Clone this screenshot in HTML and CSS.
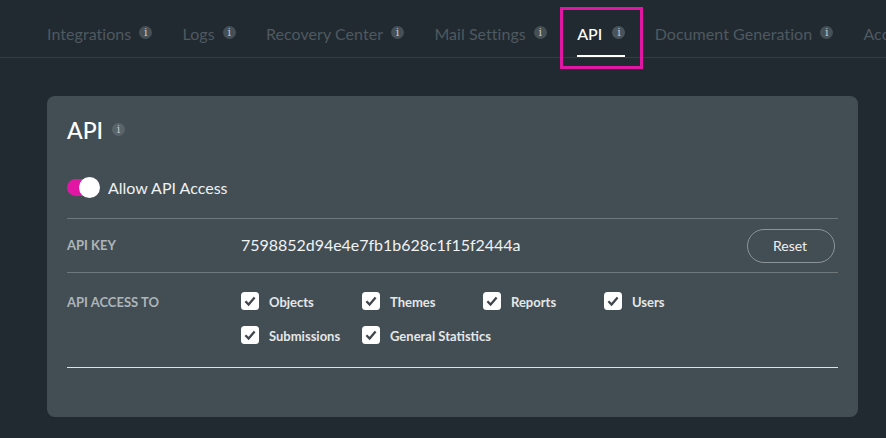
FILE: index.html
```html
<!DOCTYPE html>
<html lang="en">
<head>
<meta charset="utf-8">
<title>API</title>
<link rel="stylesheet" href="styles.css">
</head>
<body>
<nav class="tabs">
  <div class="tab"><span class="tab-label">Integrations</span><span class="info">i</span></div>
  <div class="tab"><span class="tab-label">Logs</span><span class="info">i</span></div>
  <div class="tab"><span class="tab-label">Recovery Center</span><span class="info">i</span></div>
  <div class="tab"><span class="tab-label">Mail Settings</span><span class="info">i</span></div>
  <div class="tab active"><span class="tab-label">API</span><span class="info">i</span></div>
  <div class="tab"><span class="tab-label">Document Generation</span><span class="info">i</span></div>
  <div class="tab"><span class="tab-label">Account</span></div>
  <div class="highlight"></div>
</nav>
<main class="card">
  <h1 class="title">API <span class="info">i</span></h1>
  <div class="toggle-row">
    <span class="toggle"><span class="knob"></span></span>
    <span class="toggle-label">Allow API Access</span>
  </div>
  <div class="row key-row">
    <div class="row-label">API KEY</div>
    <div class="key">7598852d94e4e7fb1b628c1f15f2444a</div>
    <button class="reset">Reset</button>
  </div>
  <div class="row access-row">
    <div class="row-label">API ACCESS TO</div>
    <div class="checks">
      <label class="check"><svg class="box" viewBox="0 0 18 18"><rect width="18" height="18" rx="3.5" fill="#fff"/><path d="M4.4 9.3 7.6 12.6 13.6 5.6" fill="none" stroke="#3f464c" stroke-width="2.3"/></svg>Objects</label>
      <label class="check"><svg class="box" viewBox="0 0 18 18"><rect width="18" height="18" rx="3.5" fill="#fff"/><path d="M4.4 9.3 7.6 12.6 13.6 5.6" fill="none" stroke="#3f464c" stroke-width="2.3"/></svg>Themes</label>
      <label class="check"><svg class="box" viewBox="0 0 18 18"><rect width="18" height="18" rx="3.5" fill="#fff"/><path d="M4.4 9.3 7.6 12.6 13.6 5.6" fill="none" stroke="#3f464c" stroke-width="2.3"/></svg>Reports</label>
      <label class="check"><svg class="box" viewBox="0 0 18 18"><rect width="18" height="18" rx="3.5" fill="#fff"/><path d="M4.4 9.3 7.6 12.6 13.6 5.6" fill="none" stroke="#3f464c" stroke-width="2.3"/></svg>Users</label>
      <label class="check"><svg class="box" viewBox="0 0 18 18"><rect width="18" height="18" rx="3.5" fill="#fff"/><path d="M4.4 9.3 7.6 12.6 13.6 5.6" fill="none" stroke="#3f464c" stroke-width="2.3"/></svg>Submissions</label>
      <label class="check wide"><svg class="box" viewBox="0 0 18 18"><rect width="18" height="18" rx="3.5" fill="#fff"/><path d="M4.4 9.3 7.6 12.6 13.6 5.6" fill="none" stroke="#3f464c" stroke-width="2.3"/></svg>General Statistics</label>
    </div>
  </div>
</main>
</body>
</html>
```

FILE: styles.css
```css
* { box-sizing: border-box; }
html, body { height: 100%; }
body {
  margin: 0;
  background: #212a30;
  font-family: "Lato", sans-serif;
  overflow: hidden;
  color: #fff;
}
.tabs {
  position: relative;
  display: flex;
  height: 58px;
  padding-left: 47px;
  gap: 30.3px;
  border-bottom: 1px solid #333e44;
  white-space: nowrap;
}
.tab {
  display: flex;
  align-items: center;
  gap: 8px;
  height: 57px;
  padding-top: 12px;
  flex: none;
  border-bottom: 2px solid transparent;
  color: #4f5960;
  font-size: 16px;
  letter-spacing: 0.05px;
}
.tab.active {
  gap: 10px;
  margin-right: -1px;
  color: #fff;
  border-bottom-color: #fff;
  font-weight: 500;
}
.tab .info { position: relative; top: -1px; }
.info {
  display: inline-flex;
  align-items: center;
  justify-content: center;
  width: 13px;
  height: 13px;
  border-radius: 50%;
  background: #454f56;
  color: #c3c8cb;
  font-family: "DejaVu Serif", serif;
  font-size: 11px;
  font-weight: 400;
  line-height: 1;
  letter-spacing: 0;
  flex: none;
}
.tab.active .info { background: #4a555b; }
.highlight {
  position: absolute;
  left: 560px;
  top: 7px;
  width: 83px;
  height: 62px;
  border: 3px solid #e216a5;
}
.card {
  margin: 38px 0 0 47px;
  width: 811px;
  height: 321px;
  padding: 0 20px;
  border-radius: 8px;
  background: #434e54;
}
.title {
  display: flex;
  align-items: flex-start;
  gap: 9px;
  margin: 0;
  padding-top: 19px;
  height: 67px;
  font-size: 23px;
  font-weight: 500;
  line-height: 30px;
}
.title .info { margin-top: 8px; background: #59646a; }
.toggle-row {
  display: flex;
  align-items: center;
  gap: 8px;
  height: 56px;
  padding-bottom: 6px;
  border-bottom: 1px solid #6d777c;
}
.toggle {
  position: relative;
  width: 33px;
  height: 17px;
  border-radius: 9px;
  background: #e216a5;
}
.knob {
  position: absolute;
  right: 0;
  top: -2px;
  width: 21px;
  height: 21px;
  border-radius: 50%;
  background: #fff;
}
.toggle-label { font-size: 16px; color: #eef0f1; }
.row {
  display: flex;
  border-bottom: 1px solid #6d777c;
}
.row-label {
  width: 174px;
  flex: none;
  font-size: 13px;
  font-weight: 700;
  color: #aeb5b9;
}
.key-row {
  align-items: center;
  height: 54px;
  padding-bottom: 2px;
}
.key {
  flex: 1;
  font-size: 16px;
  letter-spacing: -0.03px;
  color: #f0f2f3;
}
.reset {
  width: 88px;
  height: 34px;
  margin: 2px 3px 0 0;
  padding: 0 2px 0 0;
  border: 1px solid #8b9498;
  border-radius: 17px;
  background: transparent;
  color: #eef0f1;
  font-family: inherit;
  font-size: 14px;
}
.access-row {
  height: 95px;
  padding-top: 21px;
  border-bottom-color: #dfe2e3;
}
.checks {
  display: grid;
  grid-template-columns: repeat(4, 121px);
  grid-auto-rows: 34px;
  align-content: start;
  margin-top: -1px;
}
.check {
  display: flex;
  align-items: center;
  gap: 10px;
  height: 17px;
  font-size: 13px;
  font-weight: 700;
  color: #e4e7e8;
  white-space: nowrap;
}
.box { width: 18px; height: 18px; flex: none; margin-bottom: 2px; }
```
